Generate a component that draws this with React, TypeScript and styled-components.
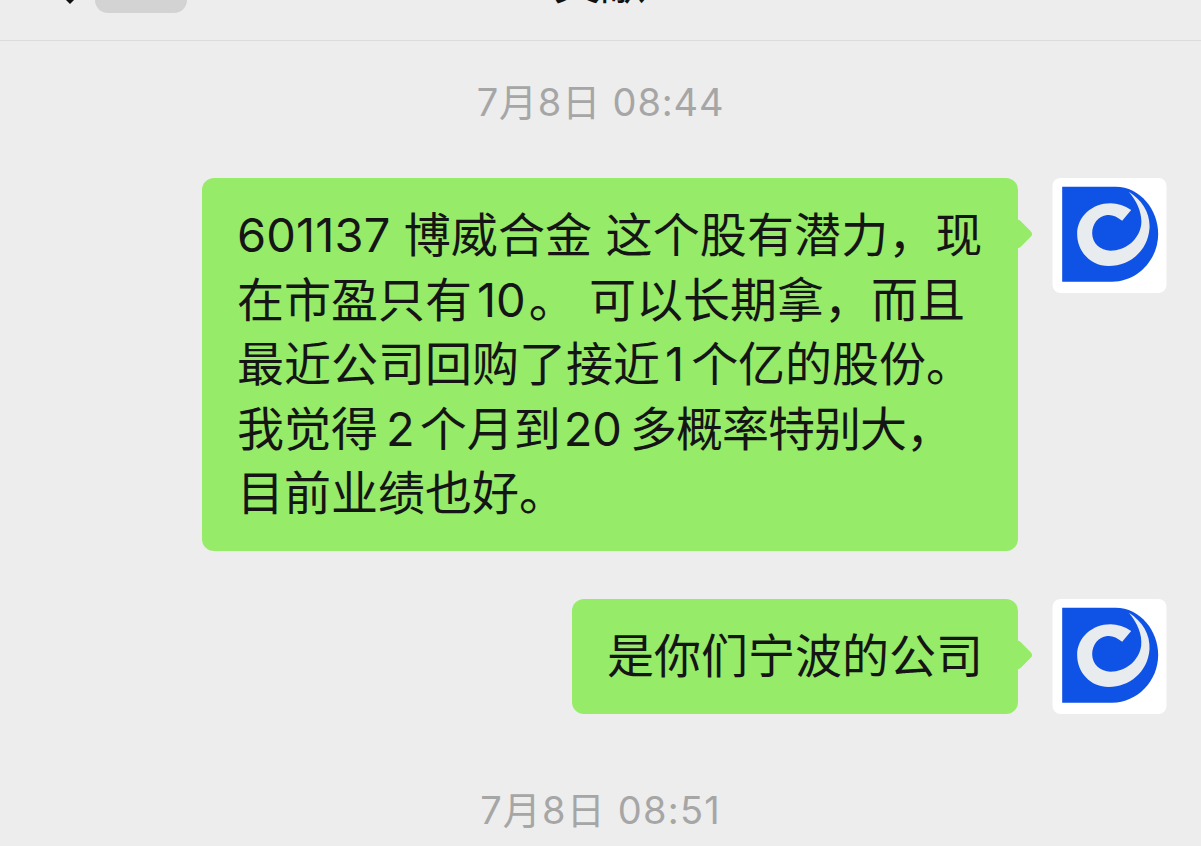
import React from "react";
import styled, { createGlobalStyle } from "styled-components";

const GlobalStyle = createGlobalStyle`
  html, body {
    margin: 0;
    padding: 0;
    background: #ededed;
  }
  body {
    font-family: "Inter", "Noto Sans CJK SC", sans-serif;
    overflow: hidden;
  }
`;

const Page = styled.div`
  width: 1201px;
  height: 846px;
  overflow: hidden;
  background: #ededed;
  display: flex;
  flex-direction: column;
`;

const TopBar = styled.header`
  flex: 0 0 41px;
  box-sizing: border-box;
  border-bottom: 1px solid #dcdcdc;
  overflow: hidden;
  display: flex;
  align-items: flex-start;
  padding-left: 52px;
`;

const BackIcon = styled.svg`
  width: 36px;
  height: 4px;
  flex: none;
`;

const Pill = styled.div`
  width: 92px;
  height: 13px;
  margin-left: 7px;
  background: #d3d3d3;
  border-radius: 0 0 22px 22px;
  flex: none;
`;

const Title = styled.div`
  margin: -41px 0 0 367px;
  font-size: 46px;
  line-height: 46px;
  color: #111;
  white-space: nowrap;
`;

const Stamp = styled.div<{ $top: number; $spacing: number }>`
  margin-top: ${(p) => p.$top}px;
  height: 50px;
  line-height: 50px;
  text-align: center;
  font-size: 38px;
  color: #a6a6a6;
  letter-spacing: ${(p) => p.$spacing}px;
`;

const Row = styled.div<{ $top: number }>`
  margin-top: ${(p) => p.$top}px;
  display: flex;
  justify-content: flex-end;
  align-items: flex-start;
  padding-right: 34px;
  gap: 34px;
`;

const Bubble = styled.div<{ $width: number }>`
  position: relative;
  box-sizing: border-box;
  width: ${(p) => p.$width}px;
  padding: 25px 0 25.5px 35px;
  background: #96eb69;
  border-radius: 12px;
  font-size: 47px;
  line-height: 64.5px;
  color: #151515;

  &::after {
    content: "";
    position: absolute;
    top: 45px;
    right: -11px;
    width: 22px;
    height: 22px;
    background: #96eb69;
    border-radius: 4px;
    transform: rotate(45deg);
  }
`;

const Line = styled.div<{ $spacing?: number }>`
  white-space: nowrap;
  letter-spacing: ${(p) => p.$spacing ?? 0}px;
`;

const Run = styled.span<{ $left?: number; $right?: number; $spacing?: number }>`
  margin-left: ${(p) => p.$left ?? 0}px;
  margin-right: ${(p) => p.$right ?? 0}px;
  letter-spacing: ${(p) => p.$spacing ?? 0}px;
`;

const AvatarSvg = styled.svg`
  width: 115px;
  height: 115px;
  flex: none;
  display: block;
`;

const Avatar = () => (
  <AvatarSvg viewBox="156 54 342 345">
    <rect x="156" y="54" width="342" height="345" rx="24" fill="#fff" />
    <path
      d="M185 80 H345 C420 80 473 150 473 222 C473 300 410 365 335 365 H185 Z"
      fill="#0f52e6"
    />
    <path
      d="M385 95 C425 120 450 160 447 205 C442 275 385 318 325 318 C270 318 230 275 230 222 C230 170 275 130 330 130 C352 130 372 137 392 150 L365 182 C350 170 335 163 320 165 C293 168 275 192 275 220 C275 250 300 272 330 272 C375 272 415 240 422 195 C426 160 410 125 385 95 Z"
      fill="#e9ecef"
    />
  </AvatarSvg>
);

export default function App() {
  return (
    <Page>
      <GlobalStyle />
      <TopBar>
        <BackIcon viewBox="0 0 36 4">
          <path d="M14 0 L18 4 L22 0 Z" fill="#111" />
        </BackIcon>
        <Pill />
        <Title>文献</Title>
      </TopBar>
      <Stamp $top={36} $spacing={0.85}>7月8日 08:44</Stamp>
      <Row $top={51}>
        <Bubble $width={816}>
          <Line $spacing={0.12}>601137 博威合金 这个股有潜力，现</Line>
          <Line>
            在市盈只有<Run $left={5} $right={3}>10</Run>。 可以长期拿，而且
          </Line>
          <Line>
            最近公司回购了接近<Run $left={5} $right={7}>1</Run>个亿的股份。
          </Line>
          <Line>
            我觉得<Run $left={8} $right={5}>2</Run>个月到<Run $left={3} $right={8}>20</Run>
            <Run $spacing={-1}>多概率特别大，</Run>
          </Line>
          <Line>目前业绩也好。</Line>
        </Bubble>
        <Avatar />
      </Row>
      <Row $top={48}>
        <Bubble $width={446}>
          <Line>是你们宁波的公司</Line>
        </Bubble>
        <Avatar />
      </Row>
      <Stamp $top={71} $spacing={1.2}>7月8日 08:51</Stamp>
    </Page>
  );
}
